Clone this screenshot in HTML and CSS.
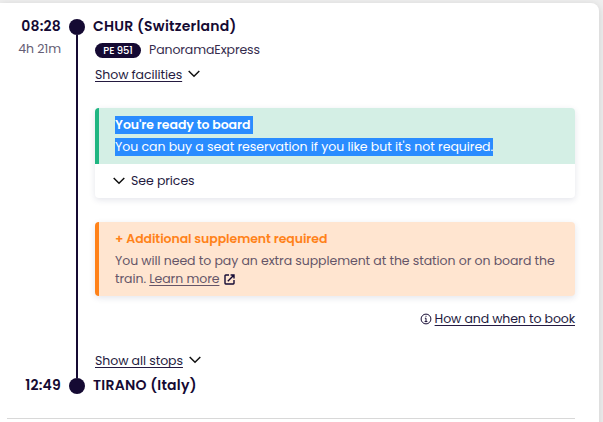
FILE: index.html
```html
<!DOCTYPE html>
<html lang="en">
<head>
  <meta charset="UTF-8" />
  <meta name="viewport" content="width=device-width, initial-scale=1.0" />
  <title>Chur - Tirano</title>
  <link rel="stylesheet" href="styles.css">
</head>
<body>
  <div class="card">
    <div class="journey">
      <div class="times">
        <div class="time departure"><span>08:28</span></div>
        <div class="duration"><span>4h 21m</span></div>
        <div class="time arrival"><span>12:49</span></div>
      </div>

      <div class="rail">
        <span class="dot"></span>
        <span class="line"></span>
        <span class="dot"></span>
      </div>

      <div class="details">
        <h3 class="station departure">CHUR (Switzerland)</h3>
        <div class="train">
          <span class="badge">PE 951</span>
          <span class="train-name">PanoramaExpress</span>
        </div>
        <div class="toggle">
          <a class="link">Show facilities</a>
          <svg class="chevron" width="12" height="8" viewBox="0 0 12 8"><path d="M.7 1l5.3 5.3L11.3 1" /></svg>
        </div>

        <div class="notice ready">
          <div class="notice-head">
            <div class="line-row"><strong class="selected ready-title">You're ready to board</strong></div>
            <div class="line-row"><span class="selected ready-text">You can buy a seat reservation if you like but it's not required.</span></div>
          </div>
          <div class="prices">
            <svg class="chevron" width="12" height="8" viewBox="0 0 12 8"><path d="M.7 1l5.3 5.3L11.3 1" /></svg>
            <span>See prices</span>
          </div>
        </div>

        <div class="notice supplement">
          <div class="supplement-title">+ Additional supplement required</div>
          <div class="supplement-text">
            You will need to pay an extra supplement at the station or on board the<br>
            train. <a class="learn">Learn more</a>
            <svg class="external" width="11" height="11" viewBox="0 0 11 11"><path d="M5 1H1.7Q1 1 1 1.7v7.6Q1 10 1.7 10h7.6q.7 0 .7-.7V6M6.6 1H10v3.4M10 1L3.8 7.2" /></svg>
          </div>
        </div>

        <div class="booking">
          <svg class="info" width="12" height="12" viewBox="0 0 12 12"><circle cx="6" cy="6" r="4.9" /><path d="M4.9 5.2H6v3.4M4.6 8.6h2.8M5.5 3.3h1" /></svg>
          <a class="link how">How and when to book</a>
        </div>

        <div class="toggle stops">
          <a class="link">Show all stops</a>
          <svg class="chevron" width="12" height="8" viewBox="0 0 12 8"><path d="M.7 1l5.3 5.3L11.3 1" /></svg>
        </div>
        <h3 class="station">TIRANO (Italy)</h3>
      </div>
    </div>
    <hr class="divider">
  </div>
</body>
</html>
```

FILE: styles.css
```css
* {
  box-sizing: border-box;
}
body {
  margin: 0;
  padding-top: 3px;
  height: 422px;
  overflow: hidden;
  background: #efefef;
  color: #150a33;
  font-family: Poppins, Inter, sans-serif;
  font-size: 12.5px;
  font-feature-settings: "cv11";
  letter-spacing: -0.07px;
  white-space: nowrap;
}
.card {
  width: 599px;
  height: 440px;
  padding: 14px 24px 0 7px;
  background: #fff;
  border-radius: 0 8px 0 0;
  box-shadow: 0 2px 8px rgba(0, 0, 0, 0.15);
}
.journey {
  display: grid;
  grid-template-columns: 54px 32px minmax(0, 1fr);
  height: 378px;
}
.times {
  display: flex;
  flex-direction: column;
  text-align: right;
}
.time {
  height: 20px;
  line-height: 20px;
  font-size: 14px;
  font-weight: 600;
  letter-spacing: 0.2px;
}
.duration {
  height: 20px;
  margin-top: 2px;
  line-height: 20px;
  color: #655e75;
}
.arrival {
  margin-top: auto;
}
.rail {
  display: flex;
  flex-direction: column;
  align-items: center;
  padding: 2px 0 1px;
}
.dot {
  width: 16px;
  height: 16px;
  border-radius: 50%;
  background: #150a33;
}
.line {
  flex: 1;
  width: 2px;
  background: #150a33;
}
.details {
  display: flex;
  flex-direction: column;
  padding-left: 2px;
}
.station {
  height: 20px;
  margin: 0 0 0 -2px;
  line-height: 20px;
  font-size: 14px;
  font-weight: 600;
  letter-spacing: 0.24px;
}
.departure {
  line-height: 18px;
}
.train {
  display: flex;
  align-items: center;
  gap: 8px;
  height: 20px;
  margin-top: 3px;
}
.badge {
  width: 46px;
  height: 15px;
  border-radius: 8px;
  background: #150a33;
  color: #fff;
  font-size: 10px;
  font-weight: 500;
  line-height: 15px;
  letter-spacing: -0.1px;
  text-align: center;
}
.train-name {
  color: #352c4d;
  letter-spacing: -0.1px;
}
.toggle {
  display: flex;
  align-items: center;
  gap: 7px;
  height: 18px;
  margin-top: 6px;
}
.link,
.learn {
  text-decoration: underline;
  text-decoration-thickness: 1px;
  text-underline-offset: 2px;
  text-decoration-skip-ink: none;
}
.link {
  color: #241a40;
}
.chevron {
  fill: none;
  stroke: #111;
  stroke-width: 1.5;
}
.toggle .chevron {
  margin: 0 0 2px -1px;
}
.notice {
  border-radius: 4px;
  box-shadow: 0 2px 6px rgba(30, 40, 90, 0.12);
  overflow: hidden;
}
.ready {
  height: 90px;
  margin-top: 24px;
}
.notice-head {
  display: flex;
  flex-direction: column;
  gap: 4px;
  height: 56px;
  padding: 8px 16px;
  border-left: 4px solid #20b682;
  background: #d4efe5;
}
.line-row {
  display: flex;
}
.selected {
  height: 18px;
  line-height: 18px;
  background: #2a8cff;
  color: #fff;
}
.ready-title {
  padding-right: 3px;
  font-weight: 600;
}
.ready-text {
  letter-spacing: -0.04px;
}
.prices {
  display: flex;
  align-items: center;
  gap: 6px;
  height: 34px;
  padding-left: 18px;
  color: #241a40;
}
.supplement {
  height: 74px;
  margin-top: 24px;
  padding: 8px 16px;
  border-left: 4px solid #ff8219;
  background: #ffe5d0;
}
.supplement-title {
  height: 18px;
  line-height: 18px;
  color: #ff8219;
  font-weight: 600;
}
.supplement-text {
  margin-top: 4px;
  line-height: 18px;
  color: #655568;
}
.external {
  margin-left: 1px;
  vertical-align: -2px;
  fill: none;
  stroke: #150a33;
  stroke-width: 1.4;
}
.booking {
  display: flex;
  align-items: center;
  justify-content: flex-end;
  gap: 3px;
  height: 18px;
  margin-top: 14px;
}
.how {
  letter-spacing: -0.11px;
}
.info {
  fill: none;
  stroke: #150a33;
}
.stops {
  margin-top: 24px;
  margin-bottom: 5px;
}
.divider {
  width: 568px;
  height: 1px;
  margin: 23px 0 0;
  border: 0;
  background: #d8d8d8;
}
```
